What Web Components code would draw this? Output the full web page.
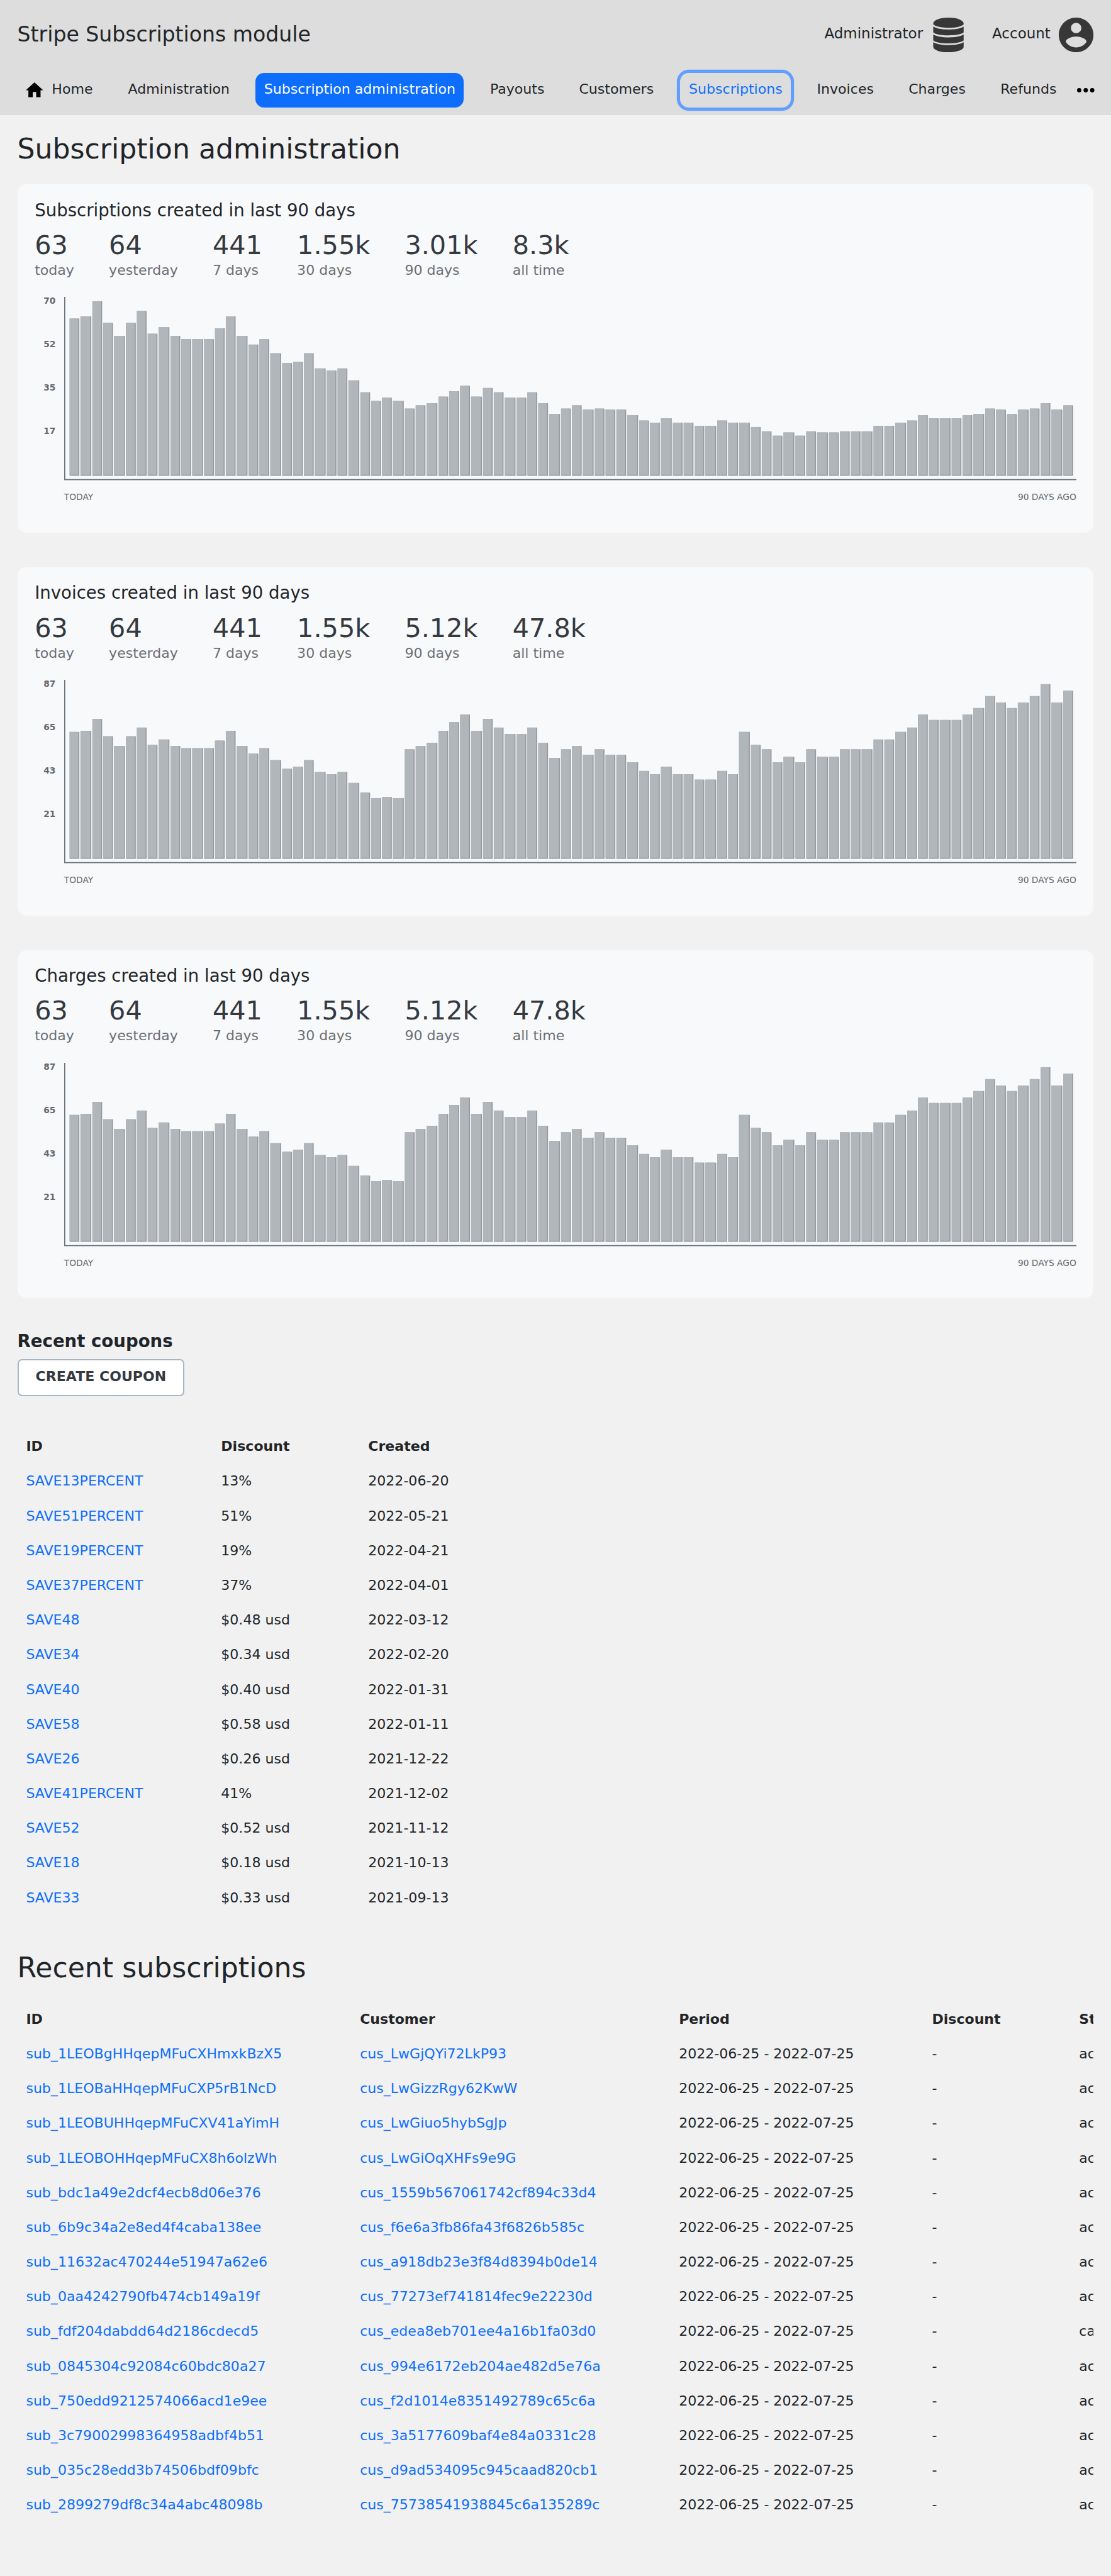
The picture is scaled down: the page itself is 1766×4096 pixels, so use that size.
<!DOCTYPE html>
<html lang="en">
<head>
<meta charset="utf-8">
<title>Subscription administration</title>
<style>
/* 1rem is one hundred design units; the design is 2048 units wide. */
html { font-size: 86.2305px; }
body { margin: 0; background: #f1f1f1; color: #212529; font-family: "DejaVu Sans", sans-serif; min-height: 47.5rem; overflow: hidden; }
</style>
</head>
<body>
<stripe-app></stripe-app>
<script>
const define = (name, html, setup) => {
  const tpl = document.createElement('template');
  tpl.innerHTML = html;
  customElements.define(name, class extends HTMLElement {
    constructor() {
      super();
      this.attachShadow({ mode: 'open' }).appendChild(tpl.content.cloneNode(true));
    }
    connectedCallback() { if (setup && !this.ready) { this.ready = true; setup(this, this.shadowRoot); } }
  });
};

const ICONS = {
  home: ['2 3 20 17', '<path d="M10 20v-6h4v6h5v-8h3L12 3 2 12h3v8z"/>'],
  dots: ['0 0 32 8', '<circle cx="4" cy="4" r="4"/><circle cx="16" cy="4" r="4"/><circle cx="28" cy="4" r="4"/>'],
  account: ['2 2 20 20', '<path d="M12 2C6.48 2 2 6.48 2 12s4.48 10 10 10 10-4.48 10-10S17.52 2 12 2zm0 3c1.66 0 3 1.34 3 3s-1.34 3-3 3-3-1.34-3-3 1.34-3 3-3zm0 14.2c-2.5 0-4.71-1.28-6-3.22.03-1.99 4-3.08 6-3.08 1.99 0 5.97 1.09 6 3.08-1.29 1.94-3.5 3.22-6 3.22z"/>'],
  database: ['0 0 56 64', '<path d="M0 11C0 4.500 12.500 0 28 0s28 4.500 28 11v1.300C53 16.200 42 18.700 28 18.700S3 16.200 0 12.300z"/><path d="M0 16.600C6 20.300 16 22 28 22s22-1.700 28-5.400v10.700C53 30.600 42 32.800 28 32.800S3 30.600 0 27.300z"/><path d="M0 31C6 34.800 16 36.500 28 36.500s22-1.700 28-5.500v11C53 45.300 42 47.500 28 47.500S3 45.300 0 42z"/><path d="M0 45.200C6 49 16 50.700 28 50.700s22-1.700 28-5.500V53.500C56 59.500 43.500 64 28 64S0 59.500 0 53.500z"/>']
};
define('ui-icon', '<style>:host{display:block;flex:none}svg{display:block;width:100%;height:100%;fill:currentColor}</style><svg></svg>', (el, root) => {
  const [box, shape] = ICONS[el.getAttribute('name')];
  const svg = root.querySelector('svg');
  svg.setAttribute('viewBox', box);
  svg.innerHTML = shape;
});

define('nav-item', `<style>
:host { display: flex; box-sizing: border-box; justify-self: start; height: .64rem; padding: 0 .155rem 0 .165rem; border-radius: .16rem; font-size: .256rem; line-height: .594rem; white-space: nowrap; }
:host([active]) { background: #0d6efd; color: #fff; }
:host([focused]) { color: #0d6efd; box-shadow: 0 0 0 .06rem #629ffd; }
</style><slot></slot>`);

define('app-header', `<style>
:host { display: flex; flex-direction: column; box-sizing: border-box; height: 2.12rem; padding: 0 .32rem; background: #ddd; }
.top { display: flex; justify-content: space-between; align-items: flex-start; height: 1.34rem; }
.title { padding-top: .314rem; font-size: .384rem; line-height: .64rem; }
.menu { display: flex; gap: .48rem; padding-top: .32rem; }
.entry { display: flex; gap: .155rem; font-size: .26667rem; line-height: .59rem; }
.entry ui-icon { width: .64rem; height: .64rem; color: #373737; }
nav { display: grid; grid-template-columns: 1.876rem 2.507rem 4.165rem 1.642rem 2.025rem 2.36rem 1.689rem 1.694rem 1.582rem .32rem; height: .64rem; }
.house { width: .32rem; height: .272rem; margin: .184rem .155rem 0 -.005rem; color: #000; }
.dots { width: .32rem; height: .08rem; margin-top: .28rem; color: #000; }
</style>
<div class="top"><div class="title">Stripe Subscriptions module</div>
<div class="menu"><div class="entry"><span>Administrator</span><ui-icon name="database"></ui-icon></div><div class="entry"><span>Account</span><ui-icon name="account"></ui-icon></div></div></div>
<nav>
<nav-item><ui-icon class="house" name="home"></ui-icon>Home</nav-item>
<nav-item>Administration</nav-item>
<nav-item active>Subscription administration</nav-item>
<nav-item>Payouts</nav-item>
<nav-item>Customers</nav-item>
<nav-item focused>Subscriptions</nav-item>
<nav-item>Invoices</nav-item>
<nav-item>Charges</nav-item>
<nav-item>Refunds</nav-item>
<ui-icon class="dots" name="dots"></ui-icon>
</nav>`);

define('stat-item', `<style>
:host { display: block; white-space: nowrap; }
.value { font-size: .48rem; line-height: .56rem; color: #343a40; }
.label { margin-top: .02rem; font-size: .256rem; line-height: .32rem; color: #6c6f73; }
</style><div class="value"><slot></slot></div><div class="label"></div>`,
(el, root) => { root.querySelector('.label').textContent = el.getAttribute('label'); });

define('bar-chart', `<style>
:host { display: block; color: #67696c; font-size: .16rem; line-height: .2rem; }
.plot { display: flex; height: 3.38rem; }
.scale { display: flex; flex-direction: column; box-sizing: border-box; width: .54rem; height: 3.2rem; margin-top: -.029rem; padding-right: .155rem; text-align: right; font-weight: bold; }
.scale span { height: .8rem; }
svg { display: block; width: 18.66rem; height: 3.38rem; flex: none; }
.ends { display: flex; justify-content: space-between; margin: .211rem 0 0 .54rem; }
</style>
<div class="plot"><div class="scale"></div><svg viewBox="0 0 1866 338"></svg></div>
<div class="ends"><span>TODAY</span><span>90 DAYS AGO</span></div>`,
(el, root) => {
  root.querySelector('.scale').innerHTML = el.getAttribute('scale').split(' ').map(v => `<span>${v}</span>`).join('');
  const edge = i => 2 * Math.round(64.18 + 10.285 * i) - 118;
  const bars = el.getAttribute('bars').trim().split(/\s+/).map((v, i) => {
    const h = +v, x = edge(i), w = edge(i + 1) - 2 - x, y = 330 - h;
    return `<rect x="${x}" y="${y}" width="${w}" height="${h}" fill="#979a9f"/><rect x="${x}" y="${y}" width="${w - 2}" height="${h - 2}" fill="#b0b6ba"/>`;
  });
  root.querySelector('svg').innerHTML = bars.join('') + '<path d="M0 0h2v336h1864v2H0z" fill="#6c757d"/>';
});

define('chart-card', `<style>
:host { display: block; box-sizing: border-box; height: 6.42rem; margin-bottom: .64rem; padding: .237rem .32rem 0; border-radius: .16rem; background: #f8f9fb; }
.title { font-size: .32rem; line-height: .48rem; }
.stats { display: flex; gap: .64rem; margin: .125rem 0 .338rem; }
</style><div class="title"></div><div class="stats"><slot name="stat"></slot></div><slot></slot>`,
(el, root) => { root.querySelector('.title').textContent = el.getAttribute('heading'); });

define('data-table', `<style>
:host { display: block; overflow: hidden; font-size: .256rem; line-height: .65rem; white-space: nowrap; }
.row { display: grid; grid-template-columns: var(--columns); height: .64rem; padding-left: .16rem; }
.head { font-weight: bold; }
a { color: #0d6efd; text-decoration: none; }
</style>`, (el, root) => {
  const links = +el.getAttribute('links');
  el.style.setProperty('--columns', el.getAttribute('columns'));
  el.rows.forEach((cells, r) => {
    const row = document.createElement('div');
    row.className = r ? 'row' : 'row head';
    cells.forEach((text, c) => {
      const cell = document.createElement(r && c < links ? 'a' : 'span');
      cell.textContent = text;
      row.appendChild(cell);
    });
    root.appendChild(row);
  });
});

define('push-button', `<style>
:host { display: block; }
button { display: block; box-sizing: border-box; width: 3.08rem; height: .68rem; margin: 0; padding: 0 0 .035rem; border: 2px solid #a9b5c3; border-radius: .08rem; background: #fff; color: #343a40; font: bold .256rem/.56rem "DejaVu Sans", sans-serif; text-align: center; white-space: nowrap; }
</style><button><slot></slot></button>`);

const COUPONS = [['ID', 'Discount', 'Created'],
  ['SAVE13PERCENT', '13%', '2022-06-20'], ['SAVE51PERCENT', '51%', '2022-05-21'],
  ['SAVE19PERCENT', '19%', '2022-04-21'], ['SAVE37PERCENT', '37%', '2022-04-01'],
  ['SAVE48', '$0.48 usd', '2022-03-12'], ['SAVE34', '$0.34 usd', '2022-02-20'],
  ['SAVE40', '$0.40 usd', '2022-01-31'], ['SAVE58', '$0.58 usd', '2022-01-11'],
  ['SAVE26', '$0.26 usd', '2021-12-22'], ['SAVE41PERCENT', '41%', '2021-12-02'],
  ['SAVE52', '$0.52 usd', '2021-11-12'], ['SAVE18', '$0.18 usd', '2021-10-13'],
  ['SAVE33', '$0.33 usd', '2021-09-13']];

const SUBSCRIPTIONS = [['ID', 'Customer', 'Period', 'Discount', 'Status']].concat([
  ['sub_1LEOBgHHqepMFuCXHmxkBzX5', 'cus_LwGjQYi72LkP93'],
  ['sub_1LEOBaHHqepMFuCXP5rB1NcD', 'cus_LwGizzRgy62KwW'],
  ['sub_1LEOBUHHqepMFuCXV41aYimH', 'cus_LwGiuo5hybSgJp'],
  ['sub_1LEOBOHHqepMFuCX8h6olzWh', 'cus_LwGiOqXHFs9e9G'],
  ['sub_bdc1a49e2dcf4ecb8d06e376', 'cus_1559b567061742cf894c33d4'],
  ['sub_6b9c34a2e8ed4f4caba138ee', 'cus_f6e6a3fb86fa43f6826b585c'],
  ['sub_11632ac470244e51947a62e6', 'cus_a918db23e3f84d8394b0de14'],
  ['sub_0aa4242790fb474cb149a19f', 'cus_77273ef741814fec9e22230d'],
  ['sub_fdf204dabdd64d2186cdecd5', 'cus_edea8eb701ee4a16b1fa03d0', 'canceled'],
  ['sub_0845304c92084c60bdc80a27', 'cus_994e6172eb204ae482d5e76a'],
  ['sub_750edd9212574066acd1e9ee', 'cus_f2d1014e8351492789c65c6a'],
  ['sub_3c79002998364958adbf4b51', 'cus_3a5177609baf4e84a0331c28'],
  ['sub_035c28edd3b74506bdf09bfc', 'cus_d9ad534095c945caad820cb1'],
  ['sub_2899279df8c34a4abc48098b', 'cus_75738541938845c6a135289c']
].map(([id, customer, status = 'active']) => [id, customer, '2022-06-25 - 2022-07-25', '-', status]));

Object.defineProperty(customElements.get('data-table').prototype, 'rows', {
  get() { return this.getAttribute('source') === 'coupons' ? COUPONS : SUBSCRIPTIONS; }
});

const SUB_BARS = '290 294 322 282 258 282 304 262 274 258 252 252 252 272 294 258 242 252 226 208 210 226 198 194 198 176 154 138 144 138 124 130 134 146 156 166 146 162 154 144 144 154 134 114 124 130 122 124 122 122 112 102 98 106 98 98 92 92 102 98 98 90 82 74 80 74 82 80 80 82 82 82 92 92 98 102 112 106 106 106 112 114 124 122 114 122 124 134 122 130';
const INVOICE_BARS = '234 236 258 226 208 226 242 210 220 208 204 204 204 218 236 208 194 204 182 166 170 182 160 156 160 140 122 112 114 112 202 208 214 236 252 266 236 258 242 230 230 242 214 186 202 208 192 202 192 192 178 162 156 170 156 156 146 146 162 156 234 210 202 178 188 178 202 188 188 202 202 202 220 220 234 242 266 256 256 256 266 278 300 288 278 288 300 322 288 310';

const card = (name, ninety, all, scale, bars) => `<chart-card heading="${name} created in last 90 days">
<stat-item slot="stat" label="today">63</stat-item><stat-item slot="stat" label="yesterday">64</stat-item><stat-item slot="stat" label="7 days">441</stat-item><stat-item slot="stat" label="30 days">1.55k</stat-item><stat-item slot="stat" label="90 days">${ninety}</stat-item><stat-item slot="stat" label="all time">${all}</stat-item>
<bar-chart scale="${scale}" bars="${bars}"></bar-chart></chart-card>`;

define('stripe-app', `<style>
:host { display: block; }
main { display: block; padding: .309rem .32rem 0; }
h1, h2, h3 { margin: 0; font-weight: normal; font-size: .512rem; line-height: .64rem; }
h1 { margin-bottom: .331rem; }
h3 { font-weight: bold; font-size: .32rem; line-height: .4rem; margin: -.042rem 0 .122rem; }
.coupons { margin: .611rem 0 .656rem; }
.subs { margin-top: .304rem; }
</style>
<app-header></app-header>
<main>
<h1>Subscription administration</h1>
${card('Subscriptions', '3.01k', '8.3k', '70 52 35 17', SUB_BARS)}
${card('Invoices', '5.12k', '47.8k', '87 65 43 21', INVOICE_BARS)}
${card('Charges', '5.12k', '47.8k', '87 65 43 21', INVOICE_BARS)}
<h3>Recent coupons</h3>
<push-button>CREATE COUPON</push-button>
<data-table class="coupons" source="coupons" links="1" columns="3.594rem 2.713rem auto"></data-table>
<h2>Recent subscriptions</h2>
<data-table class="subs" source="subscriptions" links="2" columns="6.155rem 5.88rem 4.665rem 2.713rem auto"></data-table>
</main>`);
</script>
</body>
</html>
